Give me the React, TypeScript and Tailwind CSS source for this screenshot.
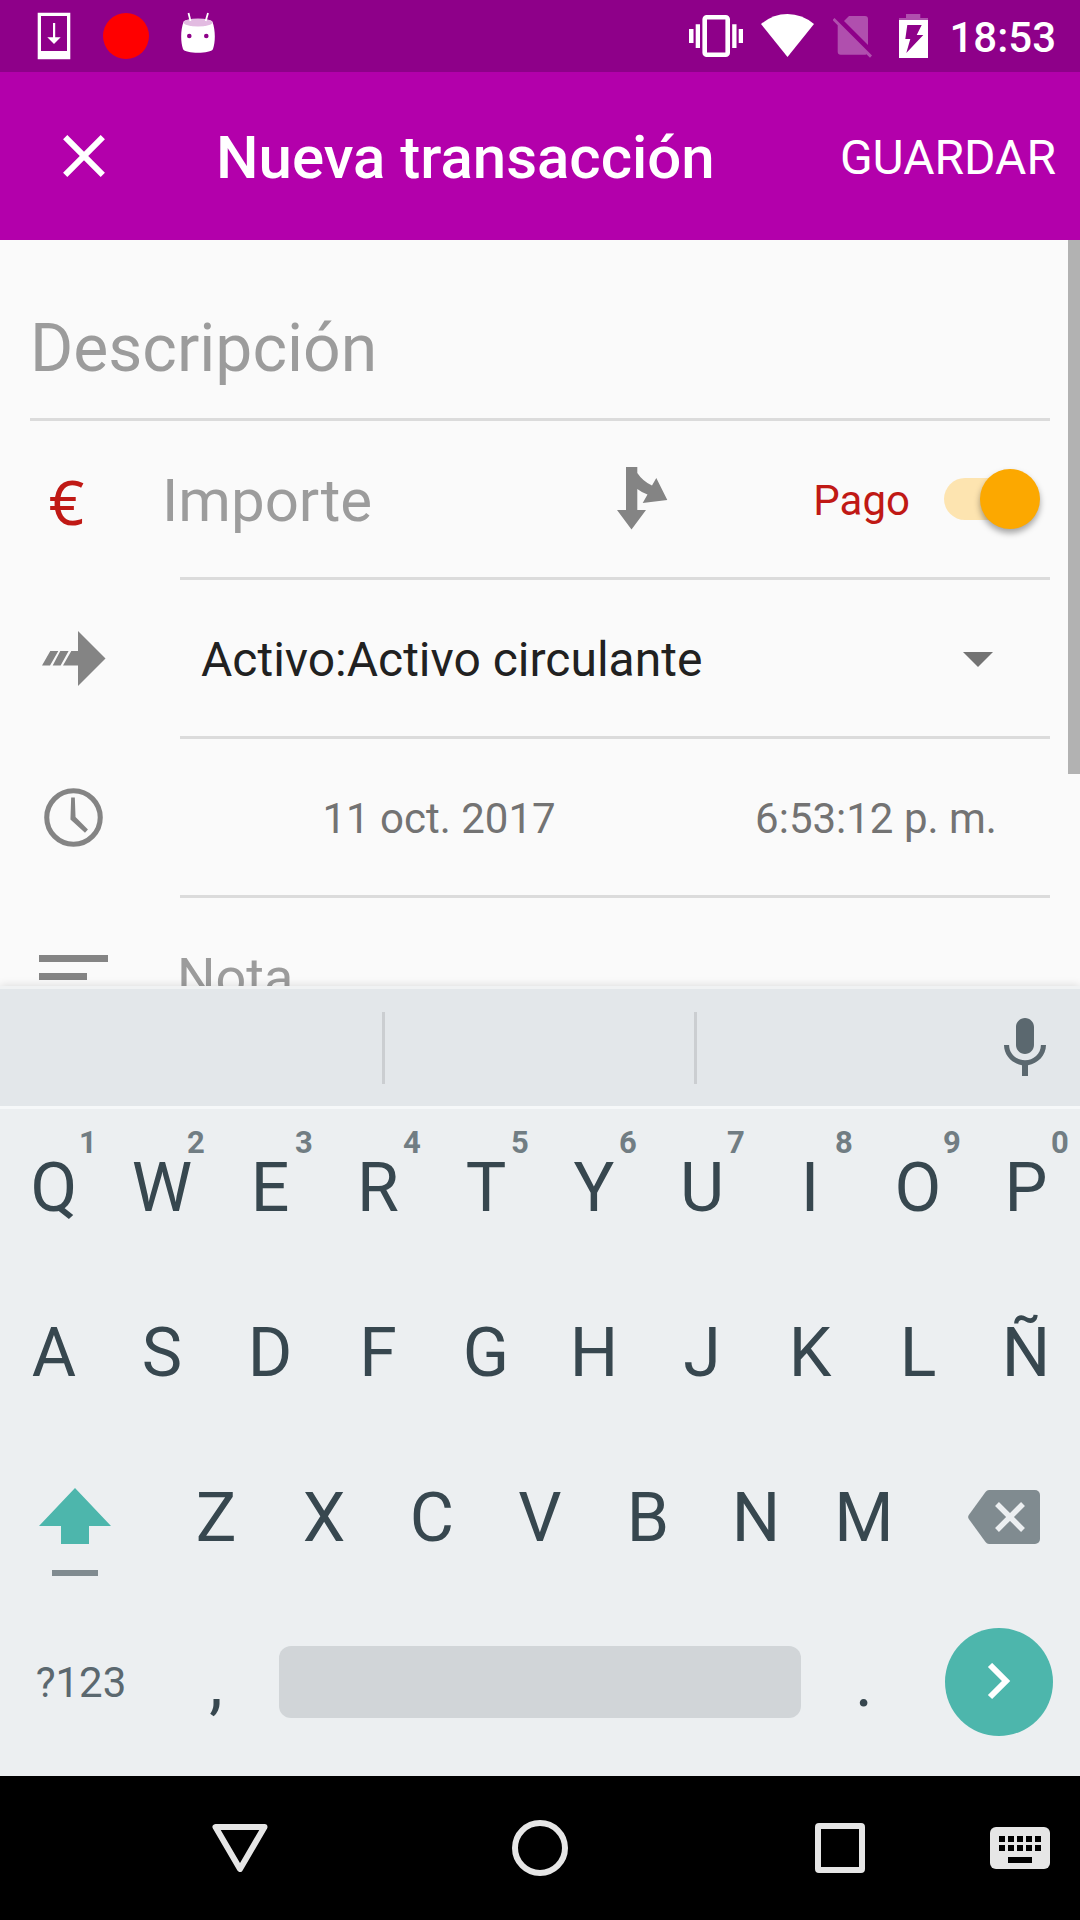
import React from "react";

const TOP_ROW = [
  ["Q", "1"],
  ["W", "2"],
  ["E", "3"],
  ["R", "4"],
  ["T", "5"],
  ["Y", "6"],
  ["U", "7"],
  ["I", "8"],
  ["O", "9"],
  ["P", "0"],
];
const HOME_ROW = ["A", "S", "D", "F", "G", "H", "J", "K", "L", "Ñ"];
const BOTTOM_ROW = ["Z", "X", "C", "V", "B", "N", "M"];

function StatusBar() {
  return (
    <div className="flex h-[72px] shrink-0 items-start justify-between bg-[#8e0089] pr-6 pl-[37px]">
      <div className="flex items-start gap-8 pt-3">
        <svg width="34" height="48" viewBox="0 0 34 48" fill="#fff">
          <path fillRule="evenodd" d="M.7 .7H33.3V47.3H.7zM4 4V39H30V4z" />
          <path d="M16 11h2.2v14.3h5.5L17 32l-6.700-6.700H16z" />
        </svg>
        <svg width="46" height="48" viewBox="0 0 46 48">
          <circle cx="23" cy="24" r="23" fill="#f00" />
        </svg>
        <svg width="34" height="42" viewBox="0 0 34 42">
          <path
            d="M2.500 10C2.500 6 31.500 6 31.500 10C34.500 18 34.500 30 32 37C30 42 4 42 2 37C-.5 30-.5 18 2.500 10z"
            fill="#fff"
          />
          <ellipse cx="17" cy="10.500" rx="14.500" ry="4" fill="#e2bbe1" />
          <path d="M7.500 1L9.500 9M27 1L24.700 9" stroke="#fff" strokeWidth="1.800" />
          <circle cx="8.300" cy="24" r="2.300" fill="#8e0089" />
          <circle cx="25.300" cy="24" r="2.300" fill="#8e0089" />
        </svg>
      </div>
      <div className="flex items-start gap-[18px] pt-3.5">
        <svg width="54" height="44" viewBox="0 0 54 44" fill="#fff">
          <rect x="15.700" y="3.300" width="23" height="37.400" rx="2" fill="none" stroke="#fff" strokeWidth="4.600" />
          <path d="M6.700 10.300H11V34H6.700zM0 15H4.500V29H0zM43.200 10.300H47.500V34H43.200zM49.700 15H54V29H49.700z" />
        </svg>
        <svg width="54" height="44" viewBox="0 0 54 44" fill="#fff">
          <path d="M0 10Q12 0 26.500 0T53 10L26.500 43z" />
        </svg>
        <svg width="40" height="46" viewBox="0 -2 40 46" fill="#b04fae">
          <path d="M11 5L16 0H32a3 3 0 0 1 3 3V29z" />
          <path d="M-.5 4L1.500 2L39 39.500L37 41.800L33.500 38.200q-1 .5-2 .5H7.700a3 3 0 0 1-3-3V9.200z" />
        </svg>
        <svg width="40" height="44" viewBox="0 0 40 44">
          <path d="M15 0H29.300V4H37V6H8V4H15z" fill="#b04fae" />
          <path d="M8 6H37V44H8z" fill="#fff" />
          <path d="M16.300 11H30.700L25.700 21H32.300L15.300 39L19.300 25H14.300z" fill="#8e0089" />
        </svg>
        <span className="-mt-px text-[42px] leading-[50px] font-medium text-white">18:53</span>
      </div>
    </div>
  );
}

function AppBar() {
  return (
    <header className="flex h-[168px] shrink-0 items-center bg-[#b300ab] pr-6 text-white">
      <button type="button" aria-label="Cerrar" className="flex h-full w-[168px] items-center justify-center">
        <svg width="42" height="42" viewBox="0 0 42 42" stroke="#fff" strokeWidth="6" fill="none">
          <path d="M2.200 2.200L39.800 39.800M39.800 2.200L2.200 39.800" />
        </svg>
      </button>
      <h1 className="ml-12 flex-1 pt-1 text-[60px] leading-[72px] font-medium">Nueva transacción</h1>
      <button type="button" className="pt-1 text-[48px] leading-[56px]">
        GUARDAR
      </button>
    </header>
  );
}

function Row({ icon, children }: { icon: React.ReactNode; children: React.ReactNode }) {
  return (
    <div className="flex h-[159px]">
      <div className="mr-[63px] flex w-[87px] items-center justify-center pb-[3px]">{icon}</div>
      <div className="flex min-w-0 flex-1 items-center border-b-[3px] border-[#dbdbdb]">{children}</div>
    </div>
  );
}

function TransactionForm() {
  return (
    <form className="relative min-h-0 flex-1 overflow-hidden bg-[#fafafa] px-[30px]">
      <input
        aria-label="Descripción"
        placeholder="Descripción"
        className="block h-[181px] w-full border-b-[3px] border-[#dbdbdb] bg-transparent pt-[39px] text-[66px] text-[#212121] outline-none placeholder:text-[#9c9c9c]"
      />
      <Row icon={<span className="pt-1 pr-3.5 font-['Noto_Sans'] text-[62px] leading-[72px] text-[#c01915]">€</span>}>
        <input
          aria-label="Importe"
          placeholder="Importe"
          className="-ml-[18px] w-0 flex-1 bg-transparent pt-1 text-[60px] text-[#212121] outline-none placeholder:text-[#9c9c9c]"
        />
        <button type="button" aria-label="Dividir transacción" className="mr-[145px]">
          <svg width="51" height="64" viewBox="0 0 51 64" fill="#848484">
            <path d="M9 0H20.300V6Q26 14.500 35 18.500L39.300 11L50.300 33L25.700 36L30.500 27.500Q24 25 20.300 22V43H29L14.500 62.500L0 43H9z" />
          </svg>
        </button>
        <label htmlFor="tipo" className="pt-1 text-[42px] leading-[50px] text-[#c01915]">
          Pago
        </label>
        <input
          id="tipo"
          type="checkbox"
          role="switch"
          defaultChecked
          className="relative mr-3.5 ml-[34px] h-[42px] w-[92px] appearance-none rounded-full bg-[#fde4b0] before:absolute before:-top-[9px] before:left-9 before:size-[60px] before:rounded-full before:bg-[#fca800] before:shadow-[0_4px_6px_rgba(0,0,0,0.35)] before:content-['']"
        />
      </Row>
      <Row
        icon={
          <svg width="64" height="55" viewBox="0 0 64 55" fill="#848484">
            <path d="M36 0L63.500 27.500L36 55V34.500H21L29.300 20H36zM10.700 34.500L18.300 20H26.600L18.600 34.500zM0 34.500L8.300 20H16.300L8 34.500z" />
          </svg>
        }
      >
        <div className="relative h-full flex-1">
          <select
            aria-label="Cuenta"
            className="h-full w-full appearance-none bg-transparent pt-1 pl-[21px] text-[48px] text-[#212121] outline-none"
          >
            <option>Activo:Activo circulante</option>
          </select>
          <svg
            width="30"
            height="15"
            viewBox="0 0 30 15"
            fill="#737373"
            className="pointer-events-none absolute top-[72px] right-[57px]"
          >
            <path d="M0 0H30L15 15z" />
          </svg>
        </div>
      </Row>
      <Row
        icon={
          <svg width="59" height="59" viewBox="0 0 58 58">
            <circle cx="29" cy="29" r="26.300" fill="none" stroke="#848484" strokeWidth="5" />
            <path d="M26.700 9.300H30.300L31 28.500L43.200 40.700L40.300 44L26 31z" fill="#848484" />
          </svg>
        }
      >
        <div className="grid h-full flex-1 grid-cols-[3fr_2fr] pt-0.5 text-[42px] text-[#737373]">
          <button type="button" className="pr-1">
            11 oct. 2017
          </button>
          <button type="button">6:53:12 p. m.</button>
        </div>
      </Row>
      <Row
        icon={
          <svg width="69" height="43" viewBox="0 0 69 43" fill="#848484">
            <path d="M0 0H69V7H0zM0 18H48V25H0zM0 36H69V43H0z" />
          </svg>
        }
      >
        <input
          aria-label="Nota"
          placeholder="Nota"
          className="-ml-[3px] w-0 flex-1 bg-transparent pt-0.5 text-[54px] text-[#212121] outline-none placeholder:text-[#9c9c9c]"
        />
      </Row>
      <div className="absolute top-0 right-0 h-[534px] w-3 bg-[#b2b2b2]" />
    </form>
  );
}

function Key({ label, hint }: { label: string; hint?: string }) {
  return (
    <button type="button" className="relative flex h-full flex-1 items-center justify-center text-[68px] leading-[80px]">
      {label}
      {hint && (
        <span className="absolute top-4 right-0 w-10 text-center text-[31px] leading-[36px] font-bold text-[#717d83]">
          {hint}
        </span>
      )}
    </button>
  );
}

function Keyboard() {
  return (
    <section
      aria-label="Teclado"
      className="relative flex shrink-0 flex-col bg-[#eceff1] text-[#37474f] shadow-[0_0_9px_rgba(0,0,0,0.14)]"
    >
      <div className="grid h-[123px] grid-cols-[385fr_312fr_383fr] items-center border-y-[3px] border-t-[#f0f2f3] border-b-[#f6f8f9] bg-[#e3e7ea]">
        <div className="h-[72px] border-r-[3px] border-[#cbced1]" />
        <div className="h-[72px] border-r-[3px] border-[#cbced1]" />
        <div className="flex justify-end pr-[19px]">
          <button type="button" aria-label="Entrada de voz">
            <svg width="72" height="72" viewBox="0 0 24 24" fill="#5b686f" className="block">
              <path d="M12 14c1.660 0 2.990-1.340 2.990-3L15 5c0-1.660-1.340-3-3-3S9 3.340 9 5v6c0 1.660 1.340 3 3 3zm5.300-3c0 3-2.540 5.100-5.300 5.100S6.700 14 6.700 11H5c0 3.410 2.720 6.230 6 6.720V21.300h2v-3.580c3.280-.48 6-3.300 6-6.720h-1.700z" />
            </svg>
          </button>
        </div>
      </div>
      <div className="flex h-[161px] pb-1">
        {TOP_ROW.map(([label, hint]) => (
          <Key key={label} label={label} hint={hint} />
        ))}
      </div>
      <div className="flex h-[165px]">
        {HOME_ROW.map((label) => (
          <Key key={label} label={label} />
        ))}
      </div>
      <div className="flex h-[165px]">
        <button type="button" aria-label="Mayúsculas" className="flex w-[15%] flex-col items-center gap-[26px] pt-[53px] pr-3">
          <svg width="72" height="56" viewBox="0 0 72 56" fill="#4db6ac">
            <path d="M36 0L72 38H50V56H22V38H0z" />
          </svg>
          <span className="h-1.5 w-[46px] bg-[#808b90]" />
        </button>
        {BOTTOM_ROW.map((label) => (
          <Key key={label} label={label} />
        ))}
        <button type="button" aria-label="Borrar" className="flex w-[15%] items-center justify-center pb-0.5 pl-2.5">
          <svg width="72" height="54" viewBox="0 0 72 54">
            <path
              d="M21 0H67a5 5 0 0 1 5 5V49a5 5 0 0 1-5 5H21q-2 0-3.500-2L.8 29Q-.5 27 .8 25L17.500 2Q19 0 21 0z"
              fill="#808b90"
            />
            <path d="M29 14L55 40M55 14L29 40" stroke="#eceff1" strokeWidth="5.500" />
          </svg>
        </button>
      </div>
      <div className="grid h-[165px] grid-cols-[15%_1fr_5fr_1fr_15%] items-center">
        <button type="button" className="h-full text-[42px] text-[#5b686f]">
          ?123
        </button>
        <Key label="," />
        <button type="button" aria-label="Espacio" className="mx-[9px] mb-0.5 h-[72px] rounded-xl bg-[#d1d5d8]" />
        <Key label="." />
        <div className="flex justify-center pb-0.5">
          <button type="button" aria-label="Siguiente" className="flex size-[108px] items-center justify-center rounded-full bg-[#4db6ac]">
            <svg width="24" height="38" viewBox="0 0 24 38" fill="none" stroke="#fff" strokeWidth="6">
              <path d="M3 2L19 18L3 34" />
            </svg>
          </button>
        </div>
      </div>
      <div className="h-[11px]" />
    </section>
  );
}

function NavigationBar() {
  return (
    <nav className="flex h-36 shrink-0 bg-black pr-[30px] pl-[90px]">
      <button type="button" aria-label="Atrás" className="flex flex-1 items-center justify-center">
        <svg width="56" height="48" viewBox="0 0 56 48" fill="none" stroke="#e6e6e6" strokeWidth="6" strokeLinejoin="round">
          <path d="M3.500 3H52.500L28 45z" />
        </svg>
      </button>
      <button type="button" aria-label="Inicio" className="flex flex-1 items-center justify-center">
        <svg width="56" height="56" viewBox="0 0 56 56" fill="none" stroke="#e6e6e6" strokeWidth="6">
          <circle cx="28" cy="28" r="25" />
        </svg>
      </button>
      <button type="button" aria-label="Recientes" className="flex flex-1 items-center justify-center">
        <svg width="50" height="50" viewBox="0 0 50 50" fill="#e6e6e6" fillRule="evenodd">
          <path d="M4 0H46a4 4 0 0 1 4 4V46a4 4 0 0 1-4 4H4a4 4 0 0 1-4-4V4a4 4 0 0 1 4-4zM6 6V44H44V6z" />
        </svg>
      </button>
      <button type="button" aria-label="Cambiar teclado" className="flex w-[60px] items-center justify-center">
        <svg width="60" height="42" viewBox="0 0 60 42">
          <rect width="60" height="42" rx="6" fill="#e6e6e6" />
          <path d="M9 9h6v6H9zM18 9h6v6h-6zM27 9h6v6h-6zM36 9h6v6h-6zM45 9h6v6h-6zM9 18h6v6H9zM18 18h6v6h-6zM27 18h6v6h-6zM36 18h6v6h-6zM45 18h6v6h-6zM18 30h24v6H18z" />
        </svg>
      </button>
    </nav>
  );
}

export default function App() {
  return (
    <div className="flex h-screen flex-col overflow-hidden font-[Roboto,sans-serif]">
      <StatusBar />
      <AppBar />
      <TransactionForm />
      <Keyboard />
      <NavigationBar />
    </div>
  );
}
